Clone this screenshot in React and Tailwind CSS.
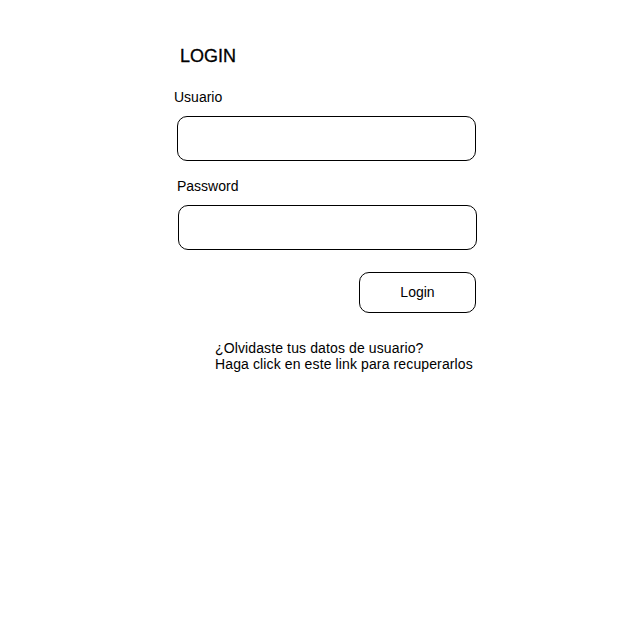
import React from 'react';

const Field = ({ offset, type }) => (
  <input
    type={type}
    className={`block ${offset} w-[299px] h-[45px] rounded-[10px] border border-black bg-white px-3 outline-none`}
  />
);

const App = () => {
  return (
    <div className="w-[640px] h-[640px] bg-white pt-[46px] text-black font-['Liberation_Sans',Arial,sans-serif]">
      <h1 className="ml-[180px] text-[18px] leading-[21px] [-webkit-text-stroke:0.3px_black]">LOGIN</h1>

      <label className="block ml-[174px] mt-[22px] text-[14px] leading-[16px]">Usuario</label>
      <Field offset="ml-[177px] mt-[11px]" type="text" />

      <label className="block ml-[177px] mt-[17px] text-[14px] leading-[16px]">Password</label>
      <Field offset="ml-[178px] mt-[11px]" type="password" />

      <button className="block ml-[359px] mt-[22px] w-[117px] h-[41px] pb-px rounded-[10px] border border-black bg-white text-[14px] leading-[16px]">
        Login
      </button>

      <p className="ml-[215px] mt-[27px] text-[14px] leading-[16px] tracking-[0.12px]">
        ¿Olvidaste tus datos de usuario?
        <br />
        Haga click en este link para recuperarlos
      </p>
    </div>
  );
};

export default App;
